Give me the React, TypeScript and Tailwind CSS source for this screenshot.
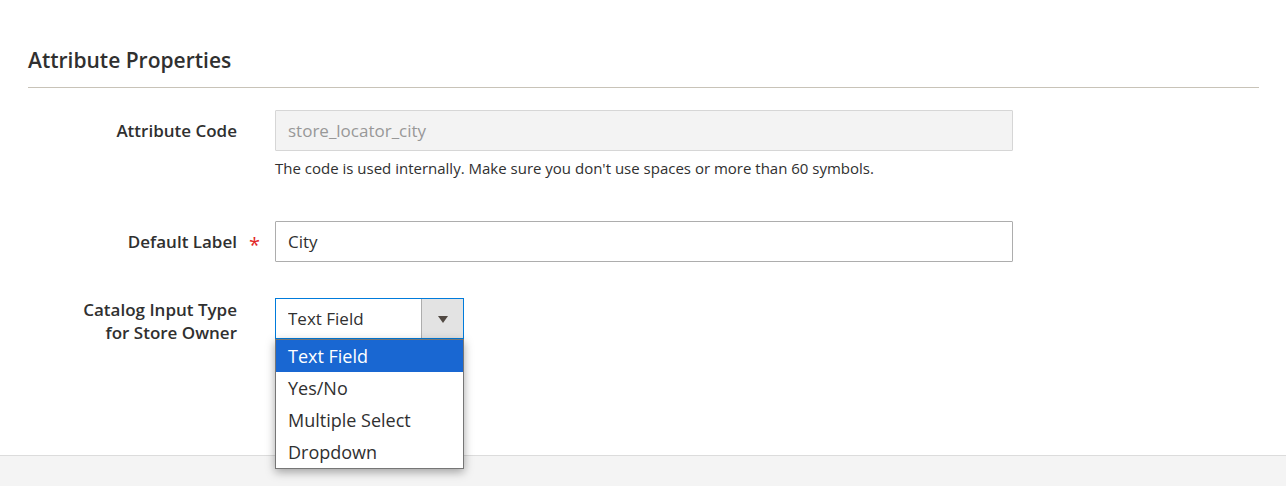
import { useState, type ReactNode } from 'react';

const inputTypes = ['Text Field', 'Yes/No', 'Multiple Select', 'Dropdown'];

interface FieldProps {
  id: string;
  label: string;
  required?: boolean;
  multiline?: boolean;
  children: ReactNode;
}

function Field({ id, label, required, multiline, children }: FieldProps) {
  return (
    <div className="grid grid-cols-[247px_minmax(0,1fr)_20%]">
      <div className={`flex pl-12 ${multiline ? 'pt-0' : 'pt-[9px]'}`}>
        <label htmlFor={id} className="flex-1 text-right text-[17px] leading-[23px] font-semibold">
          {label}
        </label>
        <span className="w-[38px] pt-[3px] pl-3 text-xl leading-6 text-[#e22626]" aria-hidden="true">
          {required && '*'}
        </span>
      </div>
      <div>{children}</div>
    </div>
  );
}

export default function App() {
  const [label, setLabel] = useState('City');
  const [inputType, setInputType] = useState('Text Field');

  return (
    <div className="min-h-screen bg-[#f4f4f4] font-['Open_Sans','Noto_Sans',sans-serif] text-[#303030]">
      <main className="border-b border-[#dcdcdc] bg-white pt-11 pr-[27px] pb-[111px] pl-7">
        <h2 className="border-b border-[#c8c3b8] pb-[11px] text-[21px] leading-8 font-semibold">
          Attribute Properties
        </h2>

        <form className="pt-[22px]">
          <Field id="attribute-code" label="Attribute Code">
            <input
              id="attribute-code"
              type="text"
              disabled
              value="store_locator_city"
              className="block h-[41px] w-full rounded-[1px] border border-[#d6d6d6] bg-[#f3f3f3] px-3 text-[17px] text-[#989898]"
            />
            <p className="pt-[7px] pb-[43px] text-[15px] leading-5">
              The code is used internally. Make sure you don't use spaces or more than 60 symbols.
            </p>
          </Field>

          <Field id="default-label" label="Default Label" required>
            <input
              id="default-label"
              type="text"
              required
              value={label}
              onChange={(e) => setLabel(e.target.value)}
              className="mb-9 block h-[41px] w-full rounded-[1px] border border-[#adadad] bg-white px-3 text-[17px]"
            />
          </Field>

          <Field id="input-type" label="Catalog Input Type for Store Owner" multiline>
            <div className="relative w-[189px]">
              <select
                id="input-type"
                value={inputType}
                onChange={(e) => setInputType(e.target.value)}
                className="block h-[41px] w-full appearance-none rounded-none border border-[#007bdb] bg-white px-3 text-[17px]"
              >
                {inputTypes.map((type) => (
                  <option key={type}>{type}</option>
                ))}
              </select>
              <div className="pointer-events-none absolute inset-y-px right-px flex w-[42px] items-center justify-center border-l border-[#adadad] bg-[#e3e3e3] pt-0.5">
                <svg width="10" height="7" viewBox="0 0 10 7" fill="#514943">
                  <path d="M0 0h10L5 7z" />
                </svg>
              </div>

              <ul
                role="listbox"
                aria-label="Catalog Input Type"
                className="absolute inset-x-0 top-full border border-[#767676] bg-white shadow-[0_3px_9px_rgba(0,0,0,0.35)]"
              >
                {inputTypes.map((type) => (
                  <li
                    key={type}
                    role="option"
                    aria-selected={type === inputType}
                    onClick={() => setInputType(type)}
                    className={`h-8 px-3 text-lg leading-8 ${type === inputType ? 'bg-[#1967d2] text-white' : ''}`}
                  >
                    {type}
                  </li>
                ))}
              </ul>
            </div>
          </Field>
        </form>
      </main>
    </div>
  );
}
